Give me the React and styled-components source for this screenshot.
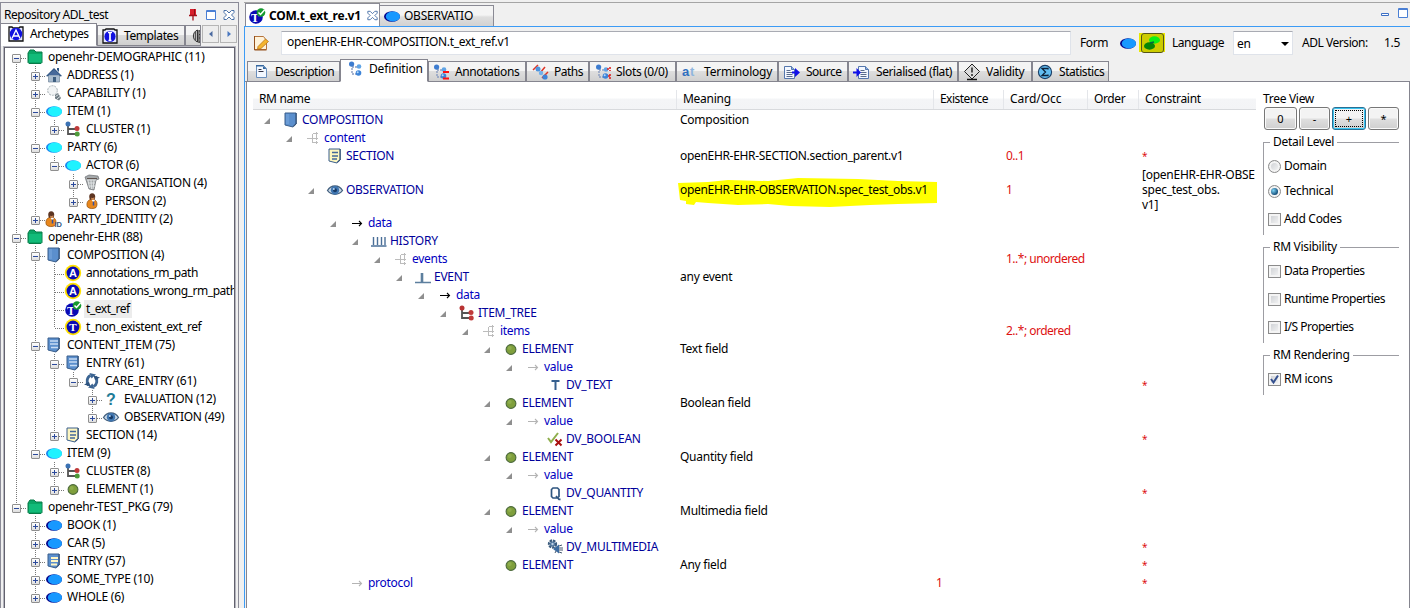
import React from 'react';
import styled, { createGlobalStyle, css } from 'styled-components';

const Global = createGlobalStyle`
  * { box-sizing: border-box; }
  html, body { margin: 0; padding: 0; }
  body {
    width: 1410px; height: 608px; overflow: hidden; background: #f0f0f0; color: #000;
    font: 12px/18px "Noto Sans", "Open Sans", sans-serif; letter-spacing: -0.28px;
  }
`;

/* ---------- icons ---------- */
const Svg = styled.svg`
  display: block; flex: none; overflow: visible;
  width: ${p => p.$s || 16}px; height: ${p => p.$s || 16}px;
`;
const SvgText = styled.text`
  font-family: ${p => (p.$serif ? '"Liberation Serif", serif' : '"Liberation Sans", sans-serif')};
  font-weight: bold; letter-spacing: 0;
`;

const book = (fill, inner) => (
  <>
    <path d="M2 1h11v11l-2 1-1 2-8-2z" fill={fill} stroke="#3b5f8c" strokeWidth="1" />
    <path d="M13.2 1v11l-2.6 2.5" fill="none" stroke="#2d4b72" />
    {inner}
  </>
);
const ellipse = (fill, edge) => (
  <>
    <ellipse cx="8" cy="8.5" rx="8" ry="5.2" fill={edge} />
    <ellipse cx="8.9" cy="8.5" rx="7.1" ry="5" fill={fill} />
  </>
);
const roundLetter = (l, ring) => (
  <>
    <circle cx="8" cy="8" r="8.2" fill={ring} />
    <circle cx="8" cy="8" r="6.4" fill="#0a0ab4" />
    <SvgText $serif={l === 'T'} x="8" y="12" fontSize="11" textAnchor="middle" fill="#fff">{l}</SvgText>
  </>
);
const branch = (a, b, c) => (
  <>
    <path d="M3 3v10h9M3 8h8" fill="none" stroke="#555" strokeWidth="1.8" />
    <circle cx="3" cy="3" r="2.5" fill={a} />
    <circle cx="12" cy="7.5" r="2.5" fill={b} />
    <circle cx="12.2" cy="13" r="2.5" fill={c} />
  </>
);
const blueTree = (
  <>
    <path d="M4 4v9h7M4 6h7" fill="none" stroke="#8a9cc0" strokeWidth="1.4" strokeDasharray="2 1" />
    <circle cx="3.600" cy="3" r="2.600" fill="#3d7cd0" /><circle cx="11" cy="5.500" r="2.300" fill="#5fa4e6" />
    <circle cx="10.500" cy="12" r="2.800" fill="#3d84d8" /><circle cx="9.700" cy="11.200" r="1" fill="#b5d9fa" />
  </>
);
const sheet = x => (
  <>
    <path d={`M${x} 2.5h7l3 3v9h-10z`} fill="#f4f8ff" stroke="#5577ad" />
    <path d={`M${x + 7} 2.5v3h3`} fill="#8db3e6" stroke="#5577ad" />
    <path d={`M${x + 2} 6.5h4M${x + 2} 8.5h6M${x + 2} 10.5h6M${x + 2} 12.5h6`} stroke="#5a6c8c" />
  </>
);
const person = (
  <>
    <path d="M3.500 14c-1.500-3 0-7 3-7.500h3c3.500.5 4.500 5 2.500 8-2 1.500-6.500 1.500-8.500-.5z" fill="#e8871c" stroke="#8d4c0c" strokeWidth=".7" />
    <ellipse cx="8.200" cy="3.800" rx="3" ry="3.500" fill="#5d3522" /><path d="M7 4.500c1.500 1 2.500.5 3.500-.5L10 7H7.500z" fill="#c98753" />
    <path d="M7.500 7l2 2.500 1.500-2.500z" fill="#fff" /><path d="M9.500 8.500v4" stroke="#3450a0" strokeWidth="1.500" />
  </>
);
const arrow = c => <path d="M3 8.500h9.500M10 6l2.500 2.500L10 11" fill="none" stroke={c} strokeWidth="1.100" />;

const DRAW = {
  folder: (
    <>
      <path d="M1 4l2-3h4l2 2h6v10.500l-1 1H2l-1-1z" fill="#0aa565" stroke="#087a48" />
      <path d="M2 5h12.500v8H2z" fill="#12bb79" />
    </>
  ),
  house: (
    <>
      <path d="M2.500 8h11v7h-11z" fill="#a9bccf" stroke="#71859a" strokeWidth=".7" />
      <path d="M0 9l8-8 8 8-1.500.6L8 4 1.500 9.600z" fill="#305683" />
      <path d="M2 8l6-5.500L14 8z" fill="#47699a" />
      <path d="M11 1h2v4l-2-2z" fill="#305683" /><path d="M7 10h3v5H7z" fill="#3e5e80" />
    </>
  ),
  bulb: (
    <>
      <circle cx="6.500" cy="5.500" r="4.800" fill="#f2f4f5" stroke="#a4aeb3" strokeDasharray="2 1" />
      <path d="M9 10l3-2 3 5-2 2.500-4-2z" fill="#6e7b82" /><path d="M9.500 11.500l3-2M11 14l3-2.500" stroke="#dfe5e8" />
    </>
  ),
  cyan: ellipse('#1ff2ff', '#1a86f0'),
  blue: ellipse('#1798ff', '#04048a'),
  cluster: branch('#3b72b4', '#c03a3a', '#4e9a3a'),
  itemtree: branch('#b83333', '#c03a3a', '#c03a3a'),
  org: (
    <>
      <path d="M1 2l4-2 9 1 1 3-3 1-2 10-5-1z" fill="#a5a9ab" stroke="#6b6f72" strokeWidth=".7" />
      <path d="M4 5l1.500 8M7 5l.5 9M10 5l-1 9M3 5h9M4 8h7M5 11h6" stroke="#e9ecee" strokeWidth=".8" />
      <path d="M3 3.500h10" stroke="#5f5450" />
    </>
  ),
  person,
  personid: (
    <>
      <g transform="translate(-3 0)">{person}</g>
      <SvgText x="8.500" y="15.500" fontSize="7.500" fill="#33557f">ID</SvgText>
    </>
  ),
  book: book('#5b8fcd', <path d="M3 2h3v10H3z" fill="#6b9cd6" />),
  bookLines: book('#5b8fcd', <path d="M4 4h8M4 7h8M5 10.500h7" stroke="#c8dcf4" strokeWidth="1.700" />),
  bookCream: book('#5b8fcd', <path d="M5 5h7M5 8h7M5 11.500h6" stroke="#fff6c4" strokeWidth="2" />),
  section: book('#fdf6c0', <path d="M5 4.500h6M5 8h6M5 11h5" stroke="#44699a" strokeWidth="1.300" />),
  A: roundLetter('A', '#ffe100'),
  Tring: roundLetter('T', '#ffe100'),
  Tcheck: (
    <>
      <circle cx="7" cy="9" r="6.800" fill="#0a0ab4" />
      <SvgText $serif x="6" y="13.500" fontSize="12" textAnchor="middle" fill="#fff">T</SvgText>
      <circle cx="12" cy="4.500" r="4.300" fill="#159a2f" />
      <path d="M9.500 4.500l2 2 4-4.500" fill="none" stroke="#fff" strokeWidth="1.500" />
    </>
  ),
  cycle: (
    <>
      <path d="M6.500 2.500C3 4 2 9 4.500 12.500M9.500 13.500c3.500-1.500 4.500-6.500 2-10" fill="none" stroke="#3c6593" strokeWidth="2.800" />
      <path d="M5.500 0l6.500 1.500L7.500 5.500zM10.500 16L4 14.500l4.500-4z" fill="#3c6593" />
      <path d="M0 11.500l5-2.500 1.500 4.500zM16 4.500L11 7 9.500 2.500z" fill="#2d527e" />
    </>
  ),
  question: <SvgText x="8" y="14" fontSize="16" textAnchor="middle" fill="#1f7c97">?</SvgText>,
  eye: (
    <>
      <path d="M.5 8.500C4 2.500 12 2.500 15.500 8.500 12 13.500 4 13.500.5 8.500z" fill="#c9d8e6" stroke="#44617f" strokeWidth="1.300" />
      <circle cx="8" cy="8.200" r="4.200" fill="#3e75b0" /><circle cx="8" cy="8.200" r="2" fill="#173a66" />
      <circle cx="6.800" cy="7" r="1" fill="#b8d8f5" />
    </>
  ),
  element: (
    <>
      <circle cx="8" cy="8.500" r="4.900" fill="#7f9f3c" stroke="#4d6b3d" strokeWidth="1.100" />
      <circle cx="6.700" cy="7" r="2" fill="#9ab958" opacity=".6" />
    </>
  ),
  multi: (
    <path d="M2 8h6M7.500 3.500v9M8 3.500h5M8 8h5M8 12.500h5M11.500 2v3.500M11.500 6v4M11.500 11v3" fill="none" stroke="#bcbcbc" shapeRendering="crispEdges" />
  ),
  arrow: arrow('#000'),
  arrowLight: arrow('#b4b4b4'),
  history: (
    <path d="M0 13h15.500M2.500 4v8M6.500 4v8M10.500 4v8M14 4v8" fill="none" stroke="#4a6f98" strokeWidth="1.400" />
  ),
  event: <path d="M0 13.500h6.500V4M7.500 4v9.500H16" fill="none" stroke="#5d7f9e" strokeWidth="1.600" />,
  text: <path d="M4.500 4h8M8.500 3.500V13" fill="none" stroke="#365f8e" strokeWidth="2" />,
  bool: (
    <>
      <path d="M1 7l3 4 7-9" fill="none" stroke="#8fae4c" strokeWidth="2" />
      <path d="M8.500 8.500l6 6M14.500 8.500l-6 6" stroke="#a80f0f" strokeWidth="2" />
    </>
  ),
  quantity: (
    <path d="M6 3h4.500L12 4.500v7L10.500 13H6l-1.500-1.500v-7zM9 11l3 3.300h1.500" fill="none" stroke="#2f5680" strokeWidth="1.700" />
  ),
  media: (
    <>
      <circle cx="5.500" cy="5" r="3.500" fill="none" stroke="#3c5c7e" strokeWidth="2.300" strokeDasharray="2.500 .8" />
      <circle cx="5.500" cy="5" r="2.600" fill="#4f759d" /><circle cx="5.500" cy="5" r="1.200" fill="#bcd0e4" />
      <path d="M6 10l6-4.500v9z" fill="#3c6ba0" /><path d="M12 7l3-1M12 9h4M12 11h4M12 13l3 1M9 12l-1 2" stroke="#43576e" />
    </>
  ),
  edit: (
    <>
      <path d="M1.500 1.500h9l3 4v9h-12z" fill="#fff3da" stroke="#b5743c" />
      <path d="M1.500 1v14h12" fill="none" stroke="#93501c" />
      <path d="M5 11.500l7.500-7.500 3 2.500-7.500 7-3.500.8z" fill="#f5b52e" stroke="#b06a10" strokeWidth=".7" />
    </>
  ),
  desc: (
    <>
      <path d="M2.500 1.500h7l3 3v9h-10z" fill="#f3f8ff" stroke="#6a8fbd" />
      <path d="M2 1h8v1.500H2zM9 1.500v3.500h3.500z" fill="#35679f" /><path d="M4.500 5.500h3M4.500 7.500h5" stroke="#334" />
    </>
  ),
  def: blueTree,
  annot: <>{blueTree}<path d="M10 8h6M10 14.500h6" stroke="#f11" strokeWidth="2" /></>,
  paths: (
    <>
      <path d="M1 6l5-5M8 9l5-6M10 14l6-6" stroke="#e03426" strokeWidth="1.500" />
      <circle cx="6" cy="5" r="2.500" fill="#4c94de" /><circle cx="9" cy="9" r="2.200" fill="#72b0ea" /><circle cx="13" cy="13" r="2.600" fill="#3d84d8" />
    </>
  ),
  slots: <>{blueTree}<path d="M15 3v4M12 5h3M15 10v5M13 12h2" stroke="#d22" strokeWidth="1.600" strokeDasharray="2 1" /></>,
  term: (
    <>
      <SvgText x="0" y="12" fontSize="13" fill="#2f6fc0">a</SvgText>
      <SvgText x="8" y="12" fontSize="13" fill="#8fb6de">t</SvgText>
    </>
  ),
  source: <>{sheet(.5)}<path d="M8 7.500h3V4l5 4.500-5 4.500V9.500H8z" fill="#1010e8" /></>,
  serial: <>{sheet(5.500)}<path d="M0 7.500h3.500V4L8 8.500 3.500 13V9.500H0z" fill="#1010e8" /></>,
  valid: (
    <>
      <path d="M8 0l7.500 7.500L8 15 .5 7.500z" fill="#dcdcdc" stroke="#222" />
      <path d="M8 3.500v5M8 10v2" stroke="#444" strokeWidth="1.800" /><path d="M3 15.500h10" stroke="#111" strokeWidth="1.500" />
    </>
  ),
  stats: (
    <>
      <circle cx="8" cy="8" r="6.600" fill="#62bdf2" stroke="#1c3f66" strokeWidth="1.100" />
      <path d="M11 5.500V4.500H5l3.500 3.500L5 11.500h6v-1" fill="none" stroke="#0d2138" strokeWidth="1.300" />
    </>
  ),
  archTab: (
    <>
      <path d="M1 1h3l1 1h6l1-1h3v14H1z" fill="#e6e8ff" stroke="#111" strokeWidth="1.300" />
      <circle cx="8" cy="8" r="6.200" fill="#1010e0" />
      <path d="M4 12.500L8 4l4 8.500M5.500 10h5" fill="none" stroke="#fff" strokeWidth="1.300" />
    </>
  ),
  tplTab: (
    <>
      <path d="M1 2h2l1-1h8l1 1h2v13H1z" fill="#e6e8ff" stroke="#111" strokeWidth="1.300" />
      <circle cx="8" cy="8.500" r="5.600" fill="#1010e0" />
      <path d="M8 4v9M6 4.500h4M6.500 12.500h3" stroke="#fff" strokeWidth="1.700" />
    </>
  ),
  tabThird: (
    <>
      <path d="M6.500 2C1 4 1 12 6.500 14z" fill="#bbb" stroke="#333" />
      <path d="M4.500 4v8" stroke="#555" /><path d="M8 2v13M8 3h4M8 6.500h4M8 10h4M8 14h4" stroke="#333" strokeWidth="1.200" />
    </>
  ),
  pin: (
    <>
      <path d="M5 2h6v6H5z" fill="#d8202c" /><path d="M4 8.500h8M8 9v4.500" stroke="#a3121c" strokeWidth="1.300" />
      <path d="M9.500 2v6" stroke="#8d0f18" />
    </>
  ),
  max: <path d="M3.500 3.500h9v9h-9zM3 4.500h10" fill="#fff" stroke="#4a7fd4" />,
  min: <path d="M4.500 8.500h7v2h-7z" fill="#fff" stroke="#3c6fc4" />,
  close: (
    <path d="M3 3.500h2.500L8 6l2.500-2.500H13V5.500L10.500 8 13 10.500v2h-2.500L8 10l-2.500 2.500H3v-2L5.500 8 3 5.500z" fill="#fff" stroke="#4a71a8" />
  ),
  flatForm: (
    <>
      <ellipse cx="10.500" cy="5" rx="5.500" ry="3.700" fill="#0cf014" />
      <ellipse cx="5.500" cy="11" rx="5.500" ry="3.700" fill="#068506" /><path d="M6 8l4-1" stroke="#064" strokeWidth="1.500" />
    </>
  ),
};
const Icon = ({ name, size }) => <Svg $s={size} viewBox="0 0 16 16">{DRAW[name]}</Svg>;

/* ---------- shell ---------- */
const Shell = styled.div`display: flex; width: 1410px; height: 608px; overflow: hidden;`;
const Side = styled.aside`
  width: 239px; margin-top: 2px; height: 606px; display: flex; flex-direction: column;
  border: solid #8b8b97; border-width: 1px 1px 0 1px;
`;
const SideTitle = styled.header`
  height: 20px; display: flex; align-items: center; padding: 3px 1px 0 3px; white-space: nowrap;
  & > span { flex: 1; letter-spacing: -0.45px; padding-top: 1px; }
  & > svg + svg { margin-left: 2px; }
`;
const SideTabs = styled.div`display: flex; height: 23px; align-items: flex-end; padding-right: 1px;`;
const SideTab = styled.div`
  display: flex; align-items: center; white-space: nowrap; overflow: hidden; flex: none;
  width: ${p => p.$w}px; height: ${p => (p.$active ? 23 : 21)}px; gap: 6px; padding-left: ${p => p.$pad}px;
  padding-bottom: ${p => (p.$active ? 2 : 0)}px;
  border: 1px solid #85858f; border-left-width: ${p => (p.$active ? 0 : 1)}px;
  background: ${p => (p.$active ? '#fff' : 'linear-gradient(#f4f4f4 45%, #dcdcdc 50%, #cfcfcf)')};
  border-bottom-color: ${p => (p.$active ? '#fff' : '#85858f')};
  letter-spacing: -0.4px;
`;
const Scroller = styled.button`
  width: 17px; height: 18px; margin: 0 0 3px 1px; padding: 0; border: 1px solid #b5b5b5; background: #ededed;
  display: flex; align-items: center; justify-content: center; flex: none;
`;
const TreeBox = styled.div`
  flex: 1; min-height: 0; margin: 1px 3px 0 3px; border: 1px solid #62626e; border-bottom: 0; outline: 1px solid #b4b4bd;
  background: #fff; overflow: hidden;
`;

/* ---------- repository tree ---------- */
const Node = styled.div`
  display: flex; height: 18px; padding-left: 2px; white-space: nowrap; align-items: center;
  & > svg { margin-left: 1px; }
`;
const dotsV = 'repeating-linear-gradient(#777 0 1px, transparent 1px 2px)';
const dotsH = 'repeating-linear-gradient(90deg, #777 0 1px, transparent 1px 2px)';
const Guide = styled.span`
  flex: none; width: 19px; height: 18px; display: grid; place-items: center; padding: 1px 0 0 0;
  background-image: ${p => [p.$up && dotsV, p.$down && dotsV, p.$h && dotsH].filter(Boolean).join(',') || 'none'};
  background-repeat: no-repeat;
  background-size: ${p => [p.$up && '1px 10px', p.$down && '1px 8px', p.$h && '10px 1px'].filter(Boolean).join(',') || 'auto'};
  background-position: ${p => [p.$up && '9px 0', p.$down && '9px 10px', p.$h && '10px 10px'].filter(Boolean).join(',') || '0 0'};
`;
const Plus = styled.i`
  width: 9px; height: 9px; border: 1px solid #8f8f8f; border-radius: 1px;
  background:
    linear-gradient(#2c4a9c, #2c4a9c) center / 5px 1px no-repeat,
    ${p => (p.$open ? '' : 'linear-gradient(#2c4a9c, #2c4a9c) center / 1px 5px no-repeat,')}
    linear-gradient(#fff, #dedede);
  margin-top: 1px;
`;
const NodeText = styled.span`
  margin-left: 3px; padding: 0 2px; letter-spacing: ${p => (p.$leaf ? -0.45 : -0.28)}px;
  ${p => p.$sel && css`background: #ececec;`}
`;

const REPO = [
  [0, 'folder', 'openehr-DEMOGRAPHIC (11)', 1],
  [1, 'house', 'ADDRESS (1)', 0], [1, 'bulb', 'CAPABILITY (1)', 0],
  [1, 'cyan', 'ITEM (1)', 1], [2, 'cluster', 'CLUSTER (1)', 0],
  [1, 'cyan', 'PARTY (6)', 1], [2, 'cyan', 'ACTOR (6)', 1],
  [3, 'org', 'ORGANISATION (4)', 0], [3, 'person', 'PERSON (2)', 0],
  [1, 'personid', 'PARTY_IDENTITY (2)', 0],
  [0, 'folder', 'openehr-EHR (88)', 1],
  [1, 'book', 'COMPOSITION (4)', 1],
  [2, 'A', 'annotations_rm_path'], [2, 'A', 'annotations_wrong_rm_path'],
  [2, 'Tcheck', 't_ext_ref', undefined, true], [2, 'Tring', 't_non_existent_ext_ref'],
  [1, 'bookLines', 'CONTENT_ITEM (75)', 1], [2, 'bookLines', 'ENTRY (61)', 1],
  [3, 'cycle', 'CARE_ENTRY (61)', 1], [4, 'question', 'EVALUATION (12)', 0], [4, 'eye', 'OBSERVATION (49)', 0],
  [2, 'section', 'SECTION (14)', 0],
  [1, 'cyan', 'ITEM (9)', 1], [2, 'cluster', 'CLUSTER (8)', 0], [2, 'element', 'ELEMENT (1)', 0],
  [0, 'folder', 'openehr-TEST_PKG (79)', 1],
  [1, 'blue', 'BOOK (1)', 0], [1, 'blue', 'CAR (5)', 0], [1, 'bookCream', 'ENTRY (57)', 0],
  [1, 'blue', 'SOME_TYPE (10)', 0], [1, 'blue', 'WHOLE (6)', 0],
];
const continues = (i, level) => {
  for (let j = i + 1; j < REPO.length; j++) {
    if (REPO[j][0] < level) return false;
    if (REPO[j][0] === level) return true;
  }
  return false;
};
const RepoTree = () => REPO.map(([depth, icon, label, open, sel], i) => (
  <Node key={i}>
    {Array.from({ length: depth }, (_, l) => {
      const on = continues(i, l);
      return <Guide key={l} $up={on} $down={on} />;
    })}
    <Guide $up={i > 0} $down={continues(i, depth)} $h>
      {open !== undefined && <Plus $open={open} />}
    </Guide>
    <Icon name={icon} />
    <NodeText $sel={sel} $leaf={open === undefined}>{label}</NodeText>
  </Node>
));

/* ---------- editor ---------- */
const Editor = styled.main`
  flex: 1; min-width: 0; margin: 2px 0 0 5px; border-top: 1px solid #a5a5a5; display: flex; flex-direction: column;
`;
const DocTabs = styled.div`display: flex; height: 23px; align-items: flex-end; padding-left: 1px;`;
const DocTab = styled.div`
  display: flex; align-items: center; white-space: nowrap; width: ${p => p.$w}px; height: ${p => (p.$active ? 23 : 21)}px;
  padding-left: ${p => (p.$active ? 3 : 4)}px; gap: 4px; border: 1px solid #8a8a94; border-bottom: 0;
  border-left-width: ${p => (p.$active ? 1 : 0)}px; padding-top: ${p => (p.$active ? 1 : 0)}px;
  background: ${p => (p.$active ? '#fff' : 'linear-gradient(#f4f4f4 45%, #dedede 55%, #d2d2d2)')};
  font-weight: ${p => (p.$active ? 'bold' : 'normal')}; letter-spacing: ${p => p.$ls}px;
`;
const WinButtons = styled.div`margin-left: auto; display: flex; align-self: center; gap: 2px; margin-right: -1px; padding-bottom: 3px;`;
const EditorBody = styled.div`
  flex: 1; border: solid #3c9bf5; border-width: 1px 0 0 1px; display: flex; flex-direction: column; min-height: 0;
`;
const Toolbar = styled.div`display: flex; align-items: center; height: 32px; padding-left: 8px; white-space: nowrap;`;
const Field = styled.div`
  width: 790px; height: 24px; margin-left: 12px; padding: 1px 5px; background: #fff;
  border: 1px solid #dfe3ea; border-top-color: #a9abb3; border-radius: 1px; letter-spacing: -0.3px;
`;
const Label = styled.span`margin-left: ${p => p.$ml}px; width: ${p => p.$w}px; letter-spacing: ${p => p.$ls || 0}px;`;
const Highlight = styled.div`
  width: 26px; height: 19px; margin: -2px 0 0 3px; background: #e8e800; display: grid; place-items: center;
`;
const Pressed = styled.div`
  width: 23px; height: 20px; border: 1px solid #55551a; border-radius: 3px; background: #cccc00; display: grid; place-items: center;
`;
const Select = styled.div`
  width: 60px; height: 24px; margin-left: 7px; padding: 4px 3px 2px; background: #fff; border: 1px solid #dfe3ea;
  border-top-color: #a9abb3; display: flex; align-items: center; justify-content: space-between;
`;
const Caret = styled.i`border: 4px solid transparent; border-top-color: #000; border-bottom: 0;`;

const ViewTabs = styled.div`
  display: flex; align-items: flex-end; height: 23px; padding-left: 2px;
  box-shadow: inset 0 -1px #85858f;
`;
const ViewTab = styled.div`
  display: flex; align-items: center; white-space: nowrap; flex: none; width: ${p => p.$w}px;
  height: ${p => (p.$active ? 23 : 21)}px; padding: ${p => (p.$active ? '0 0 2px' : '0')} 0 0 ${p => p.$pad}px;
  padding: 0 0 ${p => (p.$active ? 4 : 0)}px ${p => p.$pad}px;
  border: 1px solid #85858f; border-bottom-color: ${p => (p.$active ? '#fff' : '#85858f')};
  background: ${p => (p.$active ? '#fff' : 'linear-gradient(#f4f4f4 45%, #dedede 50%, #d0d0d0)')};
  & > span { margin-left: ${p => p.$gap}px; letter-spacing: ${p => p.$ls}px; }
`;
const VIEWS = [
  ['Description', 'desc', 93, 6, 5, -0.48], ['Definition', 'def', 88, 7, 5, -0.15], ['Annotations', 'annot', 98, 4, 6, -0.4],
  ['Paths', 'paths', 63, 5, 6, -0.5], ['Slots (0/0)', 'slots', 87, 5, 5, -0.35], ['Terminology', 'term', 102, 5, 6, -0.2],
  ['Source', 'source', 70, 5, 6, -0.5], ['Serialised (flat)', 'serial', 110, 4, 7, -0.4], ['Validity', 'valid', 74, 5, 6, -0.3],
  ['Statistics', 'stats', 77, 4, 6, -0.45],
];

const Content = styled.div`
  flex: 1; min-height: 0; display: flex; background: #fff; border: solid #85858f; border-width: 0 1px 0 1px; margin-left: 1px; padding-left: 6px;
`;
const Grid = styled.section`width: 1003px; padding-top: 8px; overflow: hidden; flex: none;`;
const Cells = styled.div`
  display: grid; grid-template-columns: 424px 257px 70px 84px 51px 117px; height: ${p => p.$h || 18}px; align-items: center;
  white-space: nowrap;
`;
const HeadRow = styled(Cells)`
  height: 20px; margin-bottom: 1px; border-bottom: 1px solid #d8dadd; align-items: stretch;
  background: linear-gradient(#fff 40%, #f4f5f7 50%, #f3f4f6);
`;
const Head = styled.div`
  padding-left: 6px; border-right: 1px solid #e4e6ea; line-height: 18px; letter-spacing: ${p => p.$ls}px;
  &:last-child { border: 0; }
`;
const NameCell = styled.div`display: flex; align-items: center; padding-left: ${p => 11 + 22 * p.$depth}px; height: 18px;`;
const Twisty = styled.i`
  width: 6px; height: 6px; margin: 2px 13px 0 0; flex: none;
  background: ${p => (p.$on ? 'linear-gradient(135deg, transparent 48%, #8f8f8f 52%)' : 'none')};
`;
const Name = styled.span`margin-left: 3px; color: ${p => (p.$attr ? '#0000c0' : '#00009a')}; letter-spacing: -0.28px;`;
const Cell = styled.div`
  padding-left: ${p => p.$pad || 3}px; color: ${p => (p.$red ? '#dd1111' : '#000')}; letter-spacing: ${p => p.$ls ?? -0.25}px;
  font-size: ${p => (p.$star ? 10 : 12)}px; position: relative;
`;
const Wrapped = styled.div`line-height: 15px; white-space: pre; padding: 0 0 1px 3px; letter-spacing: -0.25px;`;
const Marker = styled.svg`position: absolute; left: 0; top: -3px; width: 262px; height: 30px;`;
const Over = styled.span`position: relative;`;

const ROWS = [
  [0, 'book', 'COMPOSITION', 1, 'Composition'],
  [1, 'multi', 'content', 1],
  [2, 'section', 'SECTION', 0, 'openEHR-EHR-SECTION.section_parent.v1', '', '0..1', '*'],
  [2, 'eye', 'OBSERVATION', 1, 'openEHR-EHR-OBSERVATION.spec_test_obs.v1', '', '1', '[openEHR-EHR-OBSE\nspec_test_obs.\nv1]'],
  [3, 'arrow', 'data', 1], [4, 'history', 'HISTORY', 1], [5, 'multi', 'events', 1, '', '', '1..*; unordered'],
  [6, 'event', 'EVENT', 1, 'any event'], [7, 'arrow', 'data', 1], [8, 'itemtree', 'ITEM_TREE', 1],
  [9, 'multi', 'items', 1, '', '', '2..*; ordered'],
  [10, 'element', 'ELEMENT', 1, 'Text field'], [11, 'arrowLight', 'value', 1], [12, 'text', 'DV_TEXT', 0, '', '', '', '*'],
  [10, 'element', 'ELEMENT', 1, 'Boolean field'], [11, 'arrowLight', 'value', 1], [12, 'bool', 'DV_BOOLEAN', 0, '', '', '', '*'],
  [10, 'element', 'ELEMENT', 1, 'Quantity field'], [11, 'arrowLight', 'value', 1], [12, 'quantity', 'DV_QUANTITY', 0, '', '', '', '*'],
  [10, 'element', 'ELEMENT', 1, 'Multimedia field'], [11, 'arrowLight', 'value', 1], [12, 'media', 'DV_MULTIMEDIA', 0, '', '', '', '*'],
  [10, 'element', 'ELEMENT', 0, 'Any field', '', '', '*'],
  [3, 'arrowLight', 'protocol', 0, '', '1', '', '*'],
];
const Row = ({ r: [depth, icon, name, open, meaning = '', exist, card, cons] }) => {
  const tall = name === 'OBSERVATION';
  return (
    <Cells $h={tall ? 49 : 18}>
      <NameCell $depth={depth}>
        <Twisty $on={open} /><Icon name={icon} /><Name $attr={name === name.toLowerCase()}>{name}</Name>
      </NameCell>
      <Cell $ls={meaning.length > 30 ? -0.32 : -0.25}>
        {tall && (
          <Marker viewBox="0 0 262 30">
            <path d="M1 5l30-1 20-2 40 1 30-3 60 1 40 2 39 1v21l-39 1-28 1-40 2-40-1-22-2-30 1-30-2-12-1-2 3-8-1v-3l-6-1z" fill="#ffff00" />
          </Marker>
        )}
        <Over>{meaning}</Over>
      </Cell>
      <Cell $red $pad={2}>{exist}</Cell>
      <Cell $red $pad={2} $ls={-0.5}>{card}</Cell>
      <div />
      {tall ? <Wrapped>{cons}</Wrapped> : <Cell $red $star $pad={3}>{cons}</Cell>}
    </Cells>
  );
};

/* ---------- options panel ---------- */
const Options = styled.aside`width: 136px; margin-left: 7px; padding-top: 8px; white-space: nowrap; letter-spacing: -0.3px;`;
const Buttons = styled.div`display: flex; gap: 2px; margin: -1px 0 0 1px;`;
const Btn = styled.button`
  width: ${p => p.$w}px; height: 23px; padding: 0; border: 1px solid #777; border-radius: 3px; font: inherit; font-size: 11px;
  background: linear-gradient(#f3f3f3 48%, #dfdfdf 52%, #cfcfcf); box-shadow: inset 0 0 0 1px #fafafa;
  ${p => p.$focus && css`
    border-color: #2a6f93; box-shadow: inset 0 0 0 1px #39c4f0; outline: 1px dotted #000; outline-offset: -4px;
  `}
`;
const Group = styled.fieldset`
  margin: ${p => p.$mt}px 0 0; padding: 0 0 0 4px; height: ${p => p.$h}px; border: solid #9d9da3; border-width: 1px 0 0 1px; min-width: 0;
`;
const Legend = styled.legend`padding: 0 3px; margin-left: 2px; height: 18px;`;
const Option = styled.label`
  display: flex; align-items: center; gap: 3px; height: 18px; margin-top: ${p => p.$mt}px; letter-spacing: ${p => p.$ls ?? -0.3}px;
`;
const Box = styled.i`
  width: 13px; height: 13px; border: 1px solid #8b8b8b; background: linear-gradient(135deg, #c9ccd0, #f8f8f8);
  box-shadow: inset 0 0 0 2px #f4f4f4; display: grid; place-items: center; border-radius: ${p => (p.$round ? '50%' : 0)};
`;
const Dot = styled.i`width: 7px; height: 7px; border-radius: 50%; background: radial-gradient(circle at 35% 35%, #7fd3f5, #14507c 70%);`;

const HEADS = [['RM name', -0.35], ['Meaning', -0.28], ['Existence', -0.55], ['Card/Occ', -0.05], ['Order', -0.4], ['Constraint', -0.28]];

export default function App() {
  return (
    <>
      <Global />
      <Shell>
        <Side>
          <SideTitle>
            <span>Repository ADL_test</span><Icon name="pin" /><Icon name="max" /><Icon name="close" />
          </SideTitle>
          <SideTabs>
            <SideTab $active $w={96} $pad={7}><Icon name="archTab" /><span>Archetypes</span></SideTab>
            <SideTab $w={88} $pad={4}><Icon name="tplTab" /><span>Templates</span></SideTab>
            <SideTab $w={16} $pad={5}><Icon name="tabThird" /></SideTab>
            <Scroller><Svg $s={6} viewBox="0 0 6 6"><path d="M4.500 0v6L1 3z" fill="#4a6aa0" /></Svg></Scroller>
            <Scroller><Svg $s={6} viewBox="0 0 6 6"><path d="M1.500 0v6L5 3z" fill="#4a78c0" /></Svg></Scroller>
          </SideTabs>
          <TreeBox><RepoTree /></TreeBox>
        </Side>
        <Editor>
          <DocTabs>
            <DocTab $active $w={135} $ls={-0.22}><Icon name="Tcheck" /><span>COM.t_ext_re.v1</span><Icon name="close" size={15} /></DocTab>
            <DocTab $w={114} $ls={-0.25}><Icon name="blue" /><span>OBSERVATIO</span></DocTab>
            <WinButtons><Icon name="min" /><Icon name="max" /></WinButtons>
          </DocTabs>
          <EditorBody>
            <Toolbar>
              <Icon name="edit" />
              <Field>openEHR-EHR-COMPOSITION.t_ext_ref.v1</Field>
              <Label $ml={9} $w={40} $ls={-0.4}>Form</Label>
              <Icon name="blue" />
              <Highlight><Pressed><Icon name="flatForm" /></Pressed></Highlight>
              <Label $ml={7} $w={54} $ls={-0.5}>Language</Label>
              <Select>en<Caret /></Select>
              <Label $ml={9} $w={82} $ls={-0.45}>ADL Version:</Label>
              <span>1.5</span>
            </Toolbar>
            <ViewTabs>
              {VIEWS.map(([label, icon, w, pad, gap, ls], i) => (
                <ViewTab key={label} $w={w} $pad={pad} $gap={gap} $ls={ls} $active={i === 1}>
                  <Icon name={icon} /><span>{label}</span>
                </ViewTab>
              ))}
            </ViewTabs>
            <Content>
              <Grid>
                <HeadRow>
                  {HEADS.map(([h, ls]) => <Head key={h} $ls={ls}>{h}</Head>)}
                </HeadRow>
                {ROWS.map((r, i) => <Row key={i} r={r} />)}
              </Grid>
              <Options>
                <div>Tree View</div>
                <Buttons>
                  <Btn $w={33}>0</Btn><Btn $w={31}>-</Btn><Btn $w={34} $focus>+</Btn><Btn $w={31}>*</Btn>
                </Buttons>
                <Group $mt={3} $h={102}>
                  <Legend>Detail Level</Legend>
                  <Option $mt={6}><Box $round />Domain</Option>
                  <Option $mt={7}><Box $round><Dot /></Box>Technical</Option>
                  <Option $mt={10}><Box />Add Codes</Option>
                </Group>
                <Group $mt={3} $h={105}>
                  <Legend>RM Visibility</Legend>
                  <Option $mt={6} $ls={-0.5}><Box />Data Properties</Option>
                  <Option $mt={10} $ls={-0.45}><Box />Runtime Properties</Option>
                  <Option $mt={10} $ls={-0.5}><Box />I/S Properties</Option>
                </Group>
                <Group $mt={3} $h={49}>
                  <Legend>RM Rendering</Legend>
                  <Option $mt={6}>
                    <Box><Svg $s={9} viewBox="0 0 9 9"><path d="M1 4l2.500 3.500L8 .5" fill="none" stroke="#34508f" strokeWidth="2" /></Svg></Box>
                    RM icons
                  </Option>
                </Group>
              </Options>
            </Content>
          </EditorBody>
        </Editor>
      </Shell>
    </>
  );
}
